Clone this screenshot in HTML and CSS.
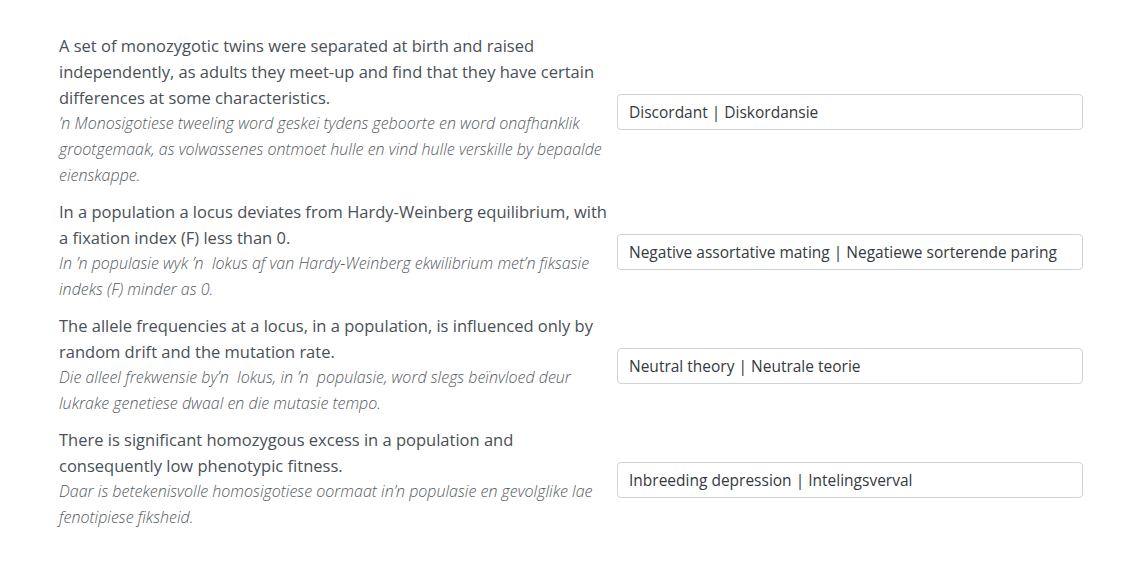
FILE: index.html
```html
<!DOCTYPE html>
<html lang="en">
<head>
<meta charset="utf-8">
<title>Match</title>
<link rel="stylesheet" href="styles.css">
</head>
<body>
<div class="question">
  <div class="row">
    <div class="stem">
      <div class="en">A set of monozygotic twins were separated at birth and raised independently, as adults they meet-up and find that they have certain differences at some characteristics.</div>
      <div class="af">ʼn Monosigotiese tweeling word geskei tydens geboorte en word onafhanklik grootgemaak, as volwassenes ontmoet hulle en vind hulle verskille by bepaalde eienskappe.</div>
    </div>
    <div class="answer"><div class="select">Discordant | Diskordansie</div></div>
  </div>
  <div class="row">
    <div class="stem">
      <div class="en">In a population a locus deviates from Hardy-Weinberg equilibrium, with a fixation index (F) less than 0.</div>
      <div class="af">In ʼn populasie wyk ʼn&nbsp; lokus af van Hardy-Weinberg ekwilibrium metʼn fiksasie indeks (F) minder as 0.</div>
    </div>
    <div class="answer"><div class="select">Negative assortative mating | Negatiewe sorterende paring</div></div>
  </div>
  <div class="row">
    <div class="stem">
      <div class="en">The allele frequencies at a locus, in a population, is influenced only by random drift and the mutation rate.</div>
      <div class="af">Die alleel frekwensie byʼn&nbsp; lokus, in ʼn&nbsp; populasie, word slegs beïnvloed deur lukrake genetiese dwaal en die mutasie tempo.</div>
    </div>
    <div class="answer"><div class="select">Neutral theory | Neutrale teorie</div></div>
  </div>
  <div class="row">
    <div class="stem">
      <div class="en">There is significant homozygous excess in a population and consequently low phenotypic fitness.</div>
      <div class="af">Daar is betekenisvolle homosigotiese oormaat inʼn populasie en gevolglike lae fenotipiese fiksheid.</div>
    </div>
    <div class="answer"><div class="select">Inbreeding depression | Intelingsverval</div></div>
  </div>
</div>
</body>
</html>
```
FILE: styles.css
```css
html, body {
  margin: 0;
  padding: 0;
  background: #ffffff;
}
body {
  font-family: "Open Sans", "Liberation Sans", sans-serif;
}
.question {
  padding: 33px 47px 0 59px;
  display: flex;
  flex-direction: column;
  gap: 11px;
}
.row {
  display: flex;
  align-items: center;
  gap: 8px;
}
.stem {
  width: 550px;
  flex: none;
}
.en {
  font-size: 16.5px;
  line-height: 26px;
  color: #495057;
}
.af {
  font-size: 16px;
  line-height: 26px;
  font-style: italic;
  font-weight: 300;
  color: #555a60;
  margin-top: -1px;
}
.answer {
  flex: 1;
  margin-top: 3px;
}
.select {
  height: 36px;
  box-sizing: border-box;
  border: 1px solid #ced4da;
  border-radius: 4px;
  padding: 0 11px;
  display: flex;
  align-items: center;
  font-size: 15.5px;
  color: #343a40;
  white-space: nowrap;
}
```
